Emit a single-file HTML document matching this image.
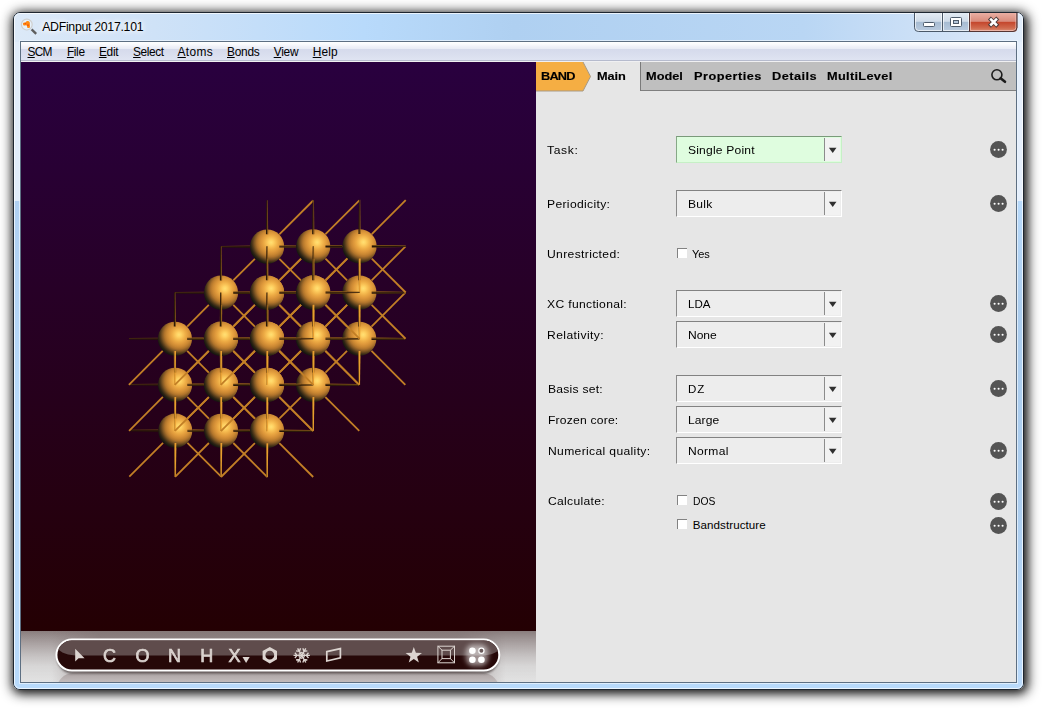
<!DOCTYPE html>
<html><head><meta charset="utf-8"><title>ADFinput</title>
<style>
html,body{margin:0;padding:0;background:#fff;}
body{width:1042px;height:709px;position:relative;overflow:hidden;font-family:"Liberation Sans",sans-serif;}
.abs{position:absolute;}
#win{position:absolute;left:13px;top:12px;width:1011px;height:678px;box-sizing:border-box;border-radius:7px;
 border:1px solid #1e2630;background:#b8dafb;overflow:hidden;}
#winsh{position:absolute;left:13px;top:12px;width:1011px;height:678px;border-radius:7px;
 box-shadow:1.5px 2px 6px rgba(0,0,0,.2),1.5px 2px 12px 2px rgba(0,0,0,.9);}
#win .tb{position:absolute;left:0;top:0;width:1009px;height:29px;background:linear-gradient(90deg,#dce9f8 0px,#cfe2f7 140px,#b8dafb 350px,#afd0f1 500px,#b9d6f4 790px,#d2e3f7 940px,#e0ecfa 1009px);}
#win .fl{position:absolute;left:0;top:29px;width:7px;height:159px;background:#e2edfa;}
#win .fl2{position:absolute;left:0;top:188px;width:7px;bottom:0;background:linear-gradient(180deg,#b0d0f2 0%,#b8dafb 45%,#b8dafb 100%);}
#win .fr{position:absolute;right:0;top:29px;width:7px;height:159px;background:#e5effc;}
#win .fr2{position:absolute;right:0;top:188px;width:7px;bottom:0;background:linear-gradient(180deg,#b8dafb 0%,#accdee 22%,#accdee 60%,#badafb 100%);}
#win .hl{position:absolute;left:0;top:0;right:0;bottom:0;border-radius:6px;border:1px solid rgba(255,255,255,.72);}
#cborder{position:absolute;left:20px;top:41px;width:997px;height:642px;box-sizing:border-box;border:1px solid #5d6f82;background:#e6e6e6;box-shadow:0 0 0 1px rgba(235,244,253,.75);}
#menubar{position:absolute;left:21px;top:42px;width:995px;height:20px;box-sizing:border-box;
 background:linear-gradient(180deg,#ffffff 0px,#fafbfd 2px,#eef0f8 5px,#e8ebf5 7px,#d6dbec 7.5px,#d9deee 12px,#dfe4f2 18px,#b6bbcd 18px,#b6bbcd 19px,#f0f0f2 19px,#f0f0f2 20px);}
#view{position:absolute;left:21px;top:62px;width:515px;height:569px;background:linear-gradient(180deg,#29003f 0%,#240003 100%);}
#tbar{position:absolute;left:21px;top:631px;width:515px;height:51px;background:linear-gradient(180deg,#8a7c7c 0%,#bab2b2 100%);overflow:hidden;}
#panel{position:absolute;left:536px;top:62px;width:480px;height:620px;background:#e6e6e6;}
.t{position:absolute;white-space:nowrap;color:#000;line-height:1;}
.t u{text-decoration:underline;text-underline-offset:0.6px;text-decoration-thickness:1px;}
/*STYLE*/
</style></head><body>
<div id="winsh"></div>
<div id="win"><div class="tb"></div><div class="fl"></div><div class="fl2"></div><div class="fr"></div><div class="fr2"></div><div class="hl"></div></div>
<div id="cborder"></div>
<div id="menubar"></div>
<div id="view"></div>
<svg class="abs" style="left:0;top:0" width="1042" height="709" viewBox="0 0 1042 709">
<defs>
<radialGradient id="sg" cx="0.615" cy="0.38" r="0.645">
<stop offset="0.00" stop-color="#ffe074"/>
<stop offset="0.10" stop-color="#ffd364"/>
<stop offset="0.20" stop-color="#f8c054"/>
<stop offset="0.32" stop-color="#ecaa44"/>
<stop offset="0.45" stop-color="#dc963a"/>
<stop offset="0.56" stop-color="#c88632"/>
<stop offset="0.65" stop-color="#b0742c"/>
<stop offset="0.75" stop-color="#825824"/>
<stop offset="0.84" stop-color="#523a1a"/>
<stop offset="0.92" stop-color="#2c2414"/>
<stop offset="1.00" stop-color="#161610"/>
</radialGradient>
<clipPath id="vc"><rect x="21" y="62" width="515" height="569"/></clipPath>
</defs>
<g clip-path="url(#vc)" stroke-width="2" stroke-linecap="butt">
<circle cx="267.13" cy="338.77" r="17.05" fill="url(#sg)"/>
<circle cx="221.20" cy="384.71" r="17.05" fill="url(#sg)"/>
<circle cx="175.26" cy="430.65" r="17.05" fill="url(#sg)"/>
<circle cx="313.13" cy="338.76" r="17.07" fill="url(#sg)"/>
<circle cx="267.12" cy="384.77" r="17.07" fill="url(#sg)"/>
<circle cx="221.11" cy="430.78" r="17.07" fill="url(#sg)"/>
<circle cx="267.12" cy="292.75" r="17.07" fill="url(#sg)"/>
<circle cx="221.11" cy="338.76" r="17.07" fill="url(#sg)"/>
<circle cx="175.10" cy="384.77" r="17.07" fill="url(#sg)"/>
<circle cx="359.26" cy="338.75" r="17.10" fill="url(#sg)"/>
<circle cx="313.18" cy="384.83" r="17.10" fill="url(#sg)"/>
<circle cx="267.10" cy="430.91" r="17.10" fill="url(#sg)"/>
<circle cx="313.18" cy="292.67" r="17.10" fill="url(#sg)"/>
<circle cx="267.10" cy="338.75" r="17.10" fill="url(#sg)"/>
<circle cx="221.02" cy="384.83" r="17.10" fill="url(#sg)"/>
<circle cx="267.10" cy="246.59" r="17.10" fill="url(#sg)"/>
<circle cx="221.02" cy="292.67" r="17.10" fill="url(#sg)"/>
<circle cx="174.94" cy="338.75" r="17.10" fill="url(#sg)"/>
<circle cx="359.38" cy="292.59" r="17.13" fill="url(#sg)"/>
<circle cx="313.23" cy="338.74" r="17.13" fill="url(#sg)"/>
<circle cx="267.08" cy="384.89" r="17.13" fill="url(#sg)"/>
<circle cx="313.23" cy="246.44" r="17.13" fill="url(#sg)"/>
<circle cx="267.08" cy="292.59" r="17.13" fill="url(#sg)"/>
<circle cx="220.93" cy="338.74" r="17.13" fill="url(#sg)"/>
<circle cx="359.51" cy="246.28" r="17.15" fill="url(#sg)"/>
<circle cx="313.29" cy="292.50" r="17.15" fill="url(#sg)"/>
<circle cx="267.06" cy="338.73" r="17.15" fill="url(#sg)"/>
<path d="M174.25 447.73L174.76 476.39L175.62 476.39L175.62 447.73Z" fill="#2c1a08"/>
<path d="M175.50 447.73L175.50 476.39L176.08 476.39L176.38 447.73Z" fill="#805418"/>
<path d="M158.19 429.54L129.55 429.86L129.55 430.44L158.19 430.42Z" fill="#6c4614"/>
<path d="M158.19 430.30L129.55 430.32L129.55 431.18L158.19 431.67Z" fill="#261608"/>
<path d="M203.75 383.63L192.30 383.78L192.30 384.53L203.75 384.51Z" fill="#6c4614"/>
<path d="M203.75 384.39L192.30 384.41L192.30 385.58L203.75 385.75Z" fill="#261608"/>
<path d="M249.84 337.71L238.20 337.88L238.20 338.64L249.84 338.60Z" fill="#6c4614"/>
<path d="M249.84 338.48L238.20 338.52L238.20 339.68L249.84 339.84Z" fill="#261608"/>
<path d="M220.16 402.00L220.35 413.62L221.51 413.62L221.53 402.00Z" fill="#2c1a08"/>
<path d="M221.41 402.00L221.39 413.62L222.15 413.62L222.29 402.00Z" fill="#805418"/>
<path d="M284.27 337.71L295.92 337.88L295.92 339.01L284.27 339.04Z" fill="#be7e26"/>
<path d="M284.27 338.92L295.92 338.89L295.92 339.68L284.27 339.85Z" fill="#6e4816"/>
<path d="M266.07 355.91L266.24 367.55L267.41 367.55L267.44 355.91Z" fill="#2c1a08"/>
<path d="M267.32 355.91L267.29 367.55L268.05 367.55L268.21 355.91Z" fill="#805418"/>
<path d="M238.36 383.62L249.85 383.77L249.85 384.91L238.36 384.95Z" fill="#be7e26"/>
<path d="M238.36 384.83L249.85 384.79L249.85 385.58L238.36 385.76Z" fill="#6e4816"/>
<path d="M192.45 429.54L203.95 429.67L203.95 430.80L192.45 430.86Z" fill="#be7e26"/>
<path d="M192.45 430.74L203.95 430.68L203.95 431.48L192.45 431.67Z" fill="#6e4816"/>
<line x1="279.33" y1="350.97" x2="301.06" y2="372.70" stroke="#c27f26" stroke-width="1.8"/>
<line x1="279.33" y1="326.58" x2="301.06" y2="304.85" stroke="#c27f26" stroke-width="1.8"/>
<line x1="233.39" y1="372.52" x2="254.94" y2="350.97" stroke="#c27f26" stroke-width="1.8"/>
<line x1="233.39" y1="396.90" x2="255.12" y2="418.64" stroke="#c27f26" stroke-width="1.8"/>
<line x1="187.45" y1="418.46" x2="208.83" y2="397.08" stroke="#c27f26" stroke-width="1.8"/>
<line x1="187.45" y1="442.84" x2="221.20" y2="476.59" stroke="#c27f26" stroke-width="1.8"/>
<line x1="163.07" y1="442.84" x2="129.32" y2="476.59" stroke="#c27f26" stroke-width="1.8"/>
<path d="M220.07 447.89L220.54 476.59L221.40 476.59L221.44 447.89Z" fill="#2c1a08"/>
<path d="M221.32 447.89L221.28 476.59L221.86 476.59L222.21 447.89Z" fill="#805418"/>
<path d="M158.00 383.68L129.32 384.05L129.32 384.63L158.00 384.57Z" fill="#6c4614"/>
<path d="M158.00 384.45L129.32 384.51L129.32 385.37L158.00 385.82Z" fill="#261608"/>
<path d="M187.41 429.63L203.99 429.67L203.99 430.55L187.41 430.51Z" fill="#6c4614"/>
<path d="M187.41 430.39L203.99 430.43L203.99 431.79L187.41 431.75Z" fill="#261608"/>
<path d="M174.16 418.49L174.10 401.90L175.46 401.90L175.52 418.49Z" fill="#2c1a08"/>
<path d="M175.40 418.49L175.34 401.90L176.22 401.90L176.28 418.49Z" fill="#805418"/>
<path d="M203.63 337.70L192.17 337.87L192.17 338.63L203.63 338.59Z" fill="#6c4614"/>
<path d="M203.63 338.47L192.17 338.51L192.17 339.67L203.63 339.83Z" fill="#261608"/>
<path d="M330.44 337.70L342.09 337.87L342.09 339.00L330.44 339.03Z" fill="#be7e26"/>
<path d="M330.44 338.91L342.09 338.88L342.09 339.67L330.44 339.83Z" fill="#6e4816"/>
<path d="M266.06 402.08L266.23 413.73L267.39 413.73L267.43 402.08Z" fill="#2c1a08"/>
<path d="M267.31 402.08L267.27 413.73L268.03 413.73L268.19 402.08Z" fill="#805418"/>
<path d="M238.14 383.67L249.79 383.69L249.79 384.57L238.14 384.55Z" fill="#6c4614"/>
<path d="M238.14 384.43L249.79 384.45L249.79 385.81L238.14 385.79Z" fill="#261608"/>
<path d="M249.79 291.72L238.14 291.90L238.14 292.66L249.79 292.60Z" fill="#6c4614"/>
<path d="M249.79 292.48L238.14 292.54L238.14 293.70L249.79 293.85Z" fill="#261608"/>
<path d="M312.04 355.92L312.19 367.59L313.36 367.59L313.41 355.92Z" fill="#2c1a08"/>
<path d="M313.29 355.92L313.24 367.59L314.00 367.59L314.17 355.92Z" fill="#805418"/>
<path d="M284.28 337.71L295.95 337.71L295.95 338.59L284.28 338.59Z" fill="#6c4614"/>
<path d="M284.28 338.47L295.95 338.47L295.95 339.83L284.28 339.83Z" fill="#261608"/>
<path d="M284.28 383.68L295.95 383.83L295.95 384.96L284.28 385.01Z" fill="#be7e26"/>
<path d="M284.28 384.89L295.95 384.84L295.95 385.64L284.28 385.82Z" fill="#6e4816"/>
<path d="M266.07 355.92L266.06 367.59L266.78 367.59L266.79 355.92Z" fill="#96621c"/>
<path d="M266.67 355.92L266.66 367.59L268.18 367.59L268.19 355.92Z" fill="#e89e30"/>
<path d="M238.30 429.66L249.98 429.80L249.98 430.93L238.30 430.99Z" fill="#be7e26"/>
<path d="M238.30 430.87L249.98 430.81L249.98 431.60L238.30 431.80Z" fill="#6e4816"/>
<path d="M284.28 291.72L295.95 291.90L295.95 293.03L284.28 293.04Z" fill="#be7e26"/>
<path d="M284.28 292.92L295.95 292.91L295.95 293.71L284.28 293.85Z" fill="#6e4816"/>
<path d="M220.10 367.59L220.08 355.92L221.44 355.92L221.46 367.59Z" fill="#2c1a08"/>
<path d="M221.34 367.59L221.32 355.92L222.20 355.92L222.22 367.59Z" fill="#805418"/>
<path d="M220.10 402.06L220.08 413.58L220.80 413.58L220.82 402.06Z" fill="#96621c"/>
<path d="M220.70 402.06L220.68 413.58L222.20 413.58L222.22 402.06Z" fill="#e89e30"/>
<path d="M266.07 321.44L266.06 309.94L267.42 309.94L267.43 321.44Z" fill="#2c1a08"/>
<path d="M267.31 321.44L267.30 309.94L268.18 309.94L268.19 321.44Z" fill="#805418"/>
<path d="M238.30 337.71L249.80 337.71L249.80 339.03L238.30 339.03Z" fill="#be7e26"/>
<path d="M238.30 338.91L249.80 338.91L249.80 339.83L238.30 339.83Z" fill="#6e4816"/>
<path d="M192.31 383.69L203.84 383.67L203.84 384.99L192.31 385.01Z" fill="#be7e26"/>
<path d="M192.31 384.89L203.84 384.87L203.84 385.79L192.31 385.81Z" fill="#6e4816"/>
<path d="M174.08 442.88L174.44 476.79L174.92 476.79L174.84 442.88Z" fill="#96621c"/>
<path d="M174.72 442.88L174.80 476.79L175.76 476.79L176.35 442.88Z" fill="#e89e30"/>
<line x1="325.34" y1="350.97" x2="359.14" y2="384.77" stroke="#c27f26" stroke-width="1.8"/>
<line x1="325.34" y1="326.55" x2="347.10" y2="304.79" stroke="#c27f26" stroke-width="1.8"/>
<line x1="279.33" y1="372.56" x2="300.92" y2="350.97" stroke="#c27f26" stroke-width="1.8"/>
<line x1="279.33" y1="304.96" x2="300.92" y2="326.55" stroke="#c27f26" stroke-width="1.8"/>
<line x1="279.33" y1="396.98" x2="313.13" y2="430.78" stroke="#c27f26" stroke-width="1.8"/>
<line x1="233.32" y1="418.57" x2="254.91" y2="396.98" stroke="#c27f26" stroke-width="1.8"/>
<line x1="233.32" y1="350.97" x2="254.91" y2="372.56" stroke="#c27f26" stroke-width="1.8"/>
<line x1="233.32" y1="442.99" x2="267.12" y2="476.79" stroke="#c27f26" stroke-width="1.8"/>
<line x1="208.90" y1="442.99" x2="175.10" y2="476.79" stroke="#c27f26" stroke-width="1.8"/>
<line x1="187.31" y1="396.98" x2="208.90" y2="418.57" stroke="#c27f26" stroke-width="1.8"/>
<line x1="279.33" y1="280.54" x2="301.09" y2="258.78" stroke="#c27f26" stroke-width="1.8"/>
<line x1="233.32" y1="326.55" x2="254.91" y2="304.96" stroke="#c27f26" stroke-width="1.8"/>
<line x1="187.31" y1="372.56" x2="208.90" y2="350.97" stroke="#c27f26" stroke-width="1.8"/>
<line x1="162.89" y1="396.98" x2="129.09" y2="430.78" stroke="#c27f26" stroke-width="1.8"/>
<path d="M376.40 337.69L405.15 338.10L405.15 338.94L376.40 339.02Z" fill="#be7e26"/>
<path d="M376.40 338.90L405.15 338.82L405.15 339.42L376.40 339.82Z" fill="#6e4816"/>
<path d="M358.15 355.94L358.48 384.77L359.34 384.77L359.52 355.94Z" fill="#2c1a08"/>
<path d="M359.40 355.94L359.22 384.77L359.80 384.77L360.28 355.94Z" fill="#805418"/>
<path d="M330.34 383.74L359.14 384.11L359.14 384.95L330.34 385.07Z" fill="#be7e26"/>
<path d="M330.34 384.95L359.14 384.83L359.14 385.43L330.34 385.88Z" fill="#6e4816"/>
<path d="M312.09 401.99L312.47 430.78L313.33 430.78L313.46 401.99Z" fill="#2c1a08"/>
<path d="M313.34 401.99L313.21 430.78L313.79 430.78L314.23 401.99Z" fill="#805418"/>
<path d="M284.29 429.79L313.13 430.12L313.13 430.96L284.29 431.12Z" fill="#be7e26"/>
<path d="M284.29 431.00L313.13 430.84L313.13 431.44L284.29 431.93Z" fill="#6e4816"/>
<path d="M266.04 448.04L266.46 476.79L267.32 476.79L267.41 448.04Z" fill="#2c1a08"/>
<path d="M267.29 448.04L267.20 476.79L267.78 476.79L268.17 448.04Z" fill="#805418"/>
<path d="M249.92 245.58L221.11 246.08L221.11 246.66L249.92 246.47Z" fill="#6c4614"/>
<path d="M249.92 246.35L221.11 246.54L221.11 247.40L249.92 247.71Z" fill="#261608"/>
<path d="M203.87 291.63L175.10 292.09L175.10 292.67L203.87 292.52Z" fill="#6c4614"/>
<path d="M203.87 292.40L175.10 292.55L175.10 293.41L203.87 293.77Z" fill="#261608"/>
<path d="M157.82 337.69L129.09 338.10L129.09 338.68L157.82 338.57Z" fill="#6c4614"/>
<path d="M157.82 338.45L129.09 338.56L129.09 339.42L157.82 339.82Z" fill="#261608"/>
<path d="M233.30 429.75L249.92 429.80L249.92 430.68L233.30 430.63Z" fill="#6c4614"/>
<path d="M233.30 430.51L249.92 430.56L249.92 431.92L233.30 431.87Z" fill="#261608"/>
<path d="M220.02 418.60L219.99 401.99L221.35 401.99L221.38 418.60Z" fill="#2c1a08"/>
<path d="M221.26 418.60L221.23 401.99L222.11 401.99L222.14 418.60Z" fill="#805418"/>
<path d="M187.27 383.73L203.87 383.75L203.87 384.63L187.27 384.61Z" fill="#6c4614"/>
<path d="M187.27 384.49L203.87 384.51L203.87 385.87L187.27 385.85Z" fill="#261608"/>
<path d="M174.00 372.57L173.94 355.94L175.30 355.94L175.36 372.57Z" fill="#2c1a08"/>
<path d="M175.24 372.57L175.18 355.94L176.06 355.94L176.12 372.57Z" fill="#805418"/>
<path d="M330.52 291.64L342.18 291.82L342.18 292.95L330.52 292.96Z" fill="#be7e26"/>
<path d="M330.52 292.84L342.18 292.83L342.18 293.62L330.52 293.77Z" fill="#6e4816"/>
<path d="M238.07 337.70L249.75 337.69L249.75 338.57L238.07 338.58Z" fill="#6c4614"/>
<path d="M238.07 338.46L249.75 338.45L249.75 339.81L238.07 339.82Z" fill="#261608"/>
<path d="M266.05 309.72L266.05 321.57L266.77 321.57L266.77 309.72Z" fill="#96621c"/>
<path d="M266.65 309.72L266.65 321.57L268.17 321.57L268.17 309.72Z" fill="#e89e30"/>
<path d="M284.29 383.73L295.98 383.75L295.98 384.63L284.29 384.61Z" fill="#6c4614"/>
<path d="M284.29 384.49L295.98 384.51L295.98 385.87L284.29 385.85Z" fill="#261608"/>
<path d="M312.09 355.93L312.10 367.63L312.82 367.63L312.81 355.93Z" fill="#96621c"/>
<path d="M312.69 355.93L312.70 367.63L314.22 367.63L314.21 355.93Z" fill="#e89e30"/>
<path d="M312.09 321.58L312.10 309.88L313.46 309.88L313.45 321.58Z" fill="#2c1a08"/>
<path d="M313.33 321.58L313.34 309.88L314.22 309.88L314.21 321.58Z" fill="#805418"/>
<path d="M284.29 291.66L295.98 291.64L295.98 292.52L284.29 292.54Z" fill="#6c4614"/>
<path d="M284.29 292.42L295.98 292.40L295.98 293.76L284.29 293.78Z" fill="#261608"/>
<path d="M284.29 337.69L295.97 337.70L295.97 339.02L284.29 339.01Z" fill="#be7e26"/>
<path d="M284.29 338.89L295.97 338.90L295.97 339.82L284.29 339.81Z" fill="#6e4816"/>
<path d="M266.05 367.62L266.05 355.94L267.41 355.94L267.41 367.62Z" fill="#2c1a08"/>
<path d="M267.29 367.62L267.29 355.94L268.17 355.94L268.17 367.62Z" fill="#805418"/>
<path d="M238.23 383.75L249.94 383.73L249.94 385.05L238.23 385.07Z" fill="#be7e26"/>
<path d="M238.23 384.95L249.94 384.93L249.94 385.85L238.23 385.87Z" fill="#6e4816"/>
<path d="M220.02 355.93L219.99 367.63L220.71 367.63L220.74 355.93Z" fill="#96621c"/>
<path d="M220.62 355.93L220.59 367.63L222.11 367.63L222.14 355.93Z" fill="#e89e30"/>
<path d="M284.29 245.58L295.97 245.78L295.97 246.91L284.29 246.91Z" fill="#be7e26"/>
<path d="M284.29 246.79L295.97 246.79L295.97 247.59L284.29 247.71Z" fill="#6e4816"/>
<path d="M238.23 291.64L249.94 291.66L249.94 292.98L238.23 292.96Z" fill="#be7e26"/>
<path d="M238.23 292.84L249.94 292.86L249.94 293.78L238.23 293.76Z" fill="#6e4816"/>
<path d="M220.02 321.58L219.99 309.88L221.35 309.88L221.38 321.58Z" fill="#2c1a08"/>
<path d="M221.26 321.58L221.23 309.88L222.11 309.88L222.14 321.58Z" fill="#805418"/>
<path d="M330.50 337.70L342.03 337.69L342.03 338.57L330.50 338.58Z" fill="#6c4614"/>
<path d="M330.50 338.46L342.03 338.45L342.03 339.81L330.50 339.82Z" fill="#261608"/>
<path d="M266.05 402.15L266.05 413.68L266.77 413.68L266.77 402.15Z" fill="#96621c"/>
<path d="M266.65 402.15L266.65 413.68L268.17 413.68L268.17 402.15Z" fill="#e89e30"/>
<path d="M266.05 275.37L266.05 263.83L267.41 263.83L267.41 275.37Z" fill="#2c1a08"/>
<path d="M267.29 275.37L267.29 263.83L268.17 263.83L268.17 275.37Z" fill="#805418"/>
<path d="M192.18 337.69L203.72 337.70L203.72 339.02L192.18 339.01Z" fill="#be7e26"/>
<path d="M192.18 338.89L203.72 338.90L203.72 339.82L192.18 339.81Z" fill="#6e4816"/>
<path d="M219.95 443.03L220.36 476.99L220.84 476.99L220.71 443.03Z" fill="#96621c"/>
<path d="M220.59 443.03L220.72 476.99L221.68 476.99L222.22 443.03Z" fill="#e89e30"/>
<path d="M173.92 397.00L174.28 430.91L174.76 430.91L174.69 397.00Z" fill="#96621c"/>
<path d="M174.57 397.00L174.64 430.91L175.60 430.91L176.19 397.00Z" fill="#e89e30"/>
<line x1="371.49" y1="350.98" x2="405.34" y2="384.83" stroke="#c27f26" stroke-width="1.8"/>
<line x1="371.49" y1="326.52" x2="405.34" y2="292.67" stroke="#c27f26" stroke-width="1.8"/>
<line x1="325.41" y1="372.60" x2="347.03" y2="350.98" stroke="#c27f26" stroke-width="1.8"/>
<line x1="325.41" y1="304.90" x2="347.03" y2="326.52" stroke="#c27f26" stroke-width="1.8"/>
<line x1="325.41" y1="397.06" x2="359.26" y2="430.91" stroke="#c27f26" stroke-width="1.8"/>
<line x1="279.33" y1="418.68" x2="300.95" y2="397.06" stroke="#c27f26" stroke-width="1.8"/>
<line x1="279.33" y1="350.98" x2="300.95" y2="372.60" stroke="#c27f26" stroke-width="1.8"/>
<line x1="279.33" y1="443.14" x2="313.18" y2="476.99" stroke="#c27f26" stroke-width="1.8"/>
<line x1="254.87" y1="443.14" x2="221.02" y2="476.99" stroke="#c27f26" stroke-width="1.8"/>
<line x1="233.25" y1="397.06" x2="254.87" y2="418.68" stroke="#c27f26" stroke-width="1.8"/>
<line x1="325.59" y1="280.26" x2="347.39" y2="258.46" stroke="#c27f26" stroke-width="1.8"/>
<line x1="279.33" y1="326.52" x2="300.95" y2="304.90" stroke="#c27f26" stroke-width="1.8"/>
<line x1="279.33" y1="258.82" x2="300.95" y2="280.44" stroke="#c27f26" stroke-width="1.8"/>
<line x1="233.25" y1="372.60" x2="254.87" y2="350.98" stroke="#c27f26" stroke-width="1.8"/>
<line x1="233.25" y1="304.90" x2="254.87" y2="326.52" stroke="#c27f26" stroke-width="1.8"/>
<line x1="208.79" y1="397.06" x2="174.94" y2="430.91" stroke="#c27f26" stroke-width="1.8"/>
<line x1="187.17" y1="350.98" x2="208.79" y2="372.60" stroke="#c27f26" stroke-width="1.8"/>
<line x1="279.33" y1="234.36" x2="313.18" y2="200.51" stroke="#c27f26" stroke-width="1.8"/>
<line x1="233.25" y1="280.44" x2="254.87" y2="258.82" stroke="#c27f26" stroke-width="1.8"/>
<line x1="187.17" y1="326.52" x2="208.79" y2="304.90" stroke="#c27f26" stroke-width="1.8"/>
<line x1="162.71" y1="350.98" x2="128.86" y2="384.83" stroke="#c27f26" stroke-width="1.8"/>
<path d="M376.55 291.55L405.34 292.01L405.34 292.85L376.55 292.88Z" fill="#be7e26"/>
<path d="M376.55 292.76L405.34 292.73L405.34 293.33L376.55 293.69Z" fill="#6e4816"/>
<path d="M358.23 326.51L358.28 309.83L359.64 309.83L359.59 326.51Z" fill="#2c1a08"/>
<path d="M359.47 326.51L359.52 309.83L360.40 309.83L360.35 326.51Z" fill="#805418"/>
<path d="M330.42 337.68L347.06 337.69L347.06 339.01L330.42 339.00Z" fill="#be7e26"/>
<path d="M330.42 338.88L347.06 338.89L347.06 339.81L330.42 339.80Z" fill="#6e4816"/>
<path d="M312.13 372.61L312.15 355.95L313.51 355.95L313.49 372.61Z" fill="#2c1a08"/>
<path d="M313.37 372.61L313.39 355.95L314.27 355.95L314.25 372.61Z" fill="#805418"/>
<path d="M284.30 383.81L300.96 383.79L300.96 385.11L284.30 385.13Z" fill="#be7e26"/>
<path d="M284.30 385.01L300.96 384.99L300.96 385.91L284.30 385.93Z" fill="#6e4816"/>
<path d="M266.04 418.71L266.03 402.07L267.39 402.07L267.40 418.71Z" fill="#2c1a08"/>
<path d="M267.28 418.71L267.27 402.07L268.15 402.07L268.16 418.71Z" fill="#805418"/>
<path d="M233.23 383.79L249.88 383.81L249.88 384.69L233.23 384.67Z" fill="#6c4614"/>
<path d="M233.23 384.55L249.88 384.57L249.88 385.93L233.23 385.91Z" fill="#261608"/>
<path d="M279.33 245.49L296.01 245.43L296.01 246.31L279.33 246.37Z" fill="#6c4614"/>
<path d="M279.33 246.25L296.01 246.19L296.01 247.55L279.33 247.61Z" fill="#261608"/>
<path d="M233.23 291.59L249.88 291.56L249.88 292.44L233.23 292.47Z" fill="#6c4614"/>
<path d="M233.23 292.35L249.88 292.32L249.88 293.68L233.23 293.71Z" fill="#261608"/>
<path d="M266.04 258.78L266.03 275.41L266.75 275.41L266.76 258.78Z" fill="#96621c"/>
<path d="M266.64 258.78L266.63 275.41L268.15 275.41L268.16 258.78Z" fill="#e89e30"/>
<path d="M219.94 372.61L219.90 355.95L221.26 355.95L221.30 372.61Z" fill="#2c1a08"/>
<path d="M221.18 372.61L221.14 355.95L222.02 355.95L222.06 372.61Z" fill="#805418"/>
<path d="M187.13 337.69L203.76 337.68L203.76 338.56L187.13 338.57Z" fill="#6c4614"/>
<path d="M187.13 338.45L203.76 338.44L203.76 339.80L187.13 339.81Z" fill="#261608"/>
<path d="M219.94 304.88L219.90 321.53L220.62 321.53L220.66 304.88Z" fill="#96621c"/>
<path d="M220.54 304.88L220.50 321.53L222.02 321.53L222.06 304.88Z" fill="#e89e30"/>
<path d="M312.14 309.66L312.15 321.53L312.87 321.53L312.86 309.66Z" fill="#96621c"/>
<path d="M312.74 309.66L312.75 321.53L314.27 321.53L314.26 309.66Z" fill="#e89e30"/>
<path d="M330.42 245.43L342.28 245.63L342.28 246.76L330.42 246.76Z" fill="#be7e26"/>
<path d="M330.42 246.64L342.28 246.64L342.28 247.43L330.42 247.56Z" fill="#6e4816"/>
<path d="M284.29 337.69L296.01 337.68L296.01 338.56L284.29 338.57Z" fill="#6c4614"/>
<path d="M284.29 338.45L296.01 338.44L296.01 339.80L284.29 339.81Z" fill="#261608"/>
<path d="M266.03 355.95L266.03 367.66L266.75 367.66L266.75 355.95Z" fill="#96621c"/>
<path d="M266.63 355.95L266.63 367.66L268.15 367.66L268.15 355.95Z" fill="#e89e30"/>
<path d="M284.30 291.56L296.00 291.58L296.00 292.90L284.30 292.88Z" fill="#be7e26"/>
<path d="M284.30 292.76L296.00 292.78L296.00 293.70L284.30 293.68Z" fill="#6e4816"/>
<path d="M266.03 321.54L266.03 309.83L267.39 309.83L267.39 321.54Z" fill="#2c1a08"/>
<path d="M267.27 321.54L267.27 309.83L268.15 309.83L268.15 321.54Z" fill="#805418"/>
<path d="M238.17 337.68L249.89 337.69L249.89 339.01L238.17 339.00Z" fill="#be7e26"/>
<path d="M238.17 338.88L249.89 338.89L249.89 339.81L238.17 339.80Z" fill="#6e4816"/>
<path d="M330.58 291.58L342.13 291.56L342.13 292.44L330.58 292.46Z" fill="#6c4614"/>
<path d="M330.58 292.34L342.13 292.32L342.13 293.68L330.58 293.70Z" fill="#261608"/>
<path d="M312.14 275.26L312.15 263.70L313.51 263.70L313.50 275.26Z" fill="#2c1a08"/>
<path d="M313.38 275.26L313.39 263.70L314.27 263.70L314.26 275.26Z" fill="#805418"/>
<path d="M371.53 337.61L405.54 338.08L405.54 338.65L371.53 338.55Z" fill="#6c4614"/>
<path d="M371.53 338.43L405.54 338.53L405.54 339.40L371.53 339.88Z" fill="#261608"/>
<path d="M358.16 350.98L358.72 384.89L359.20 384.89L358.92 350.98Z" fill="#96621c"/>
<path d="M358.80 350.98L359.08 384.89L360.04 384.89L360.43 350.98Z" fill="#e89e30"/>
<path d="M325.43 383.71L359.38 384.23L359.38 384.80L325.43 384.65Z" fill="#6c4614"/>
<path d="M325.43 384.53L359.38 384.68L359.38 385.55L325.43 385.98Z" fill="#261608"/>
<path d="M312.06 397.08L312.57 431.04L313.05 431.04L312.82 397.08Z" fill="#96621c"/>
<path d="M312.70 397.08L312.93 431.04L313.89 431.04L314.33 397.08Z" fill="#e89e30"/>
<path d="M279.33 429.81L313.23 430.38L313.23 430.96L279.33 430.75Z" fill="#6c4614"/>
<path d="M279.33 430.63L313.23 430.84L313.23 431.70L279.33 432.08Z" fill="#261608"/>
<path d="M265.96 443.18L266.42 477.19L266.90 477.19L266.72 443.18Z" fill="#96621c"/>
<path d="M266.60 443.18L266.78 477.19L267.74 477.19L268.23 443.18Z" fill="#e89e30"/>
<path d="M219.86 397.08L220.27 431.04L220.75 431.04L220.63 397.08Z" fill="#96621c"/>
<path d="M220.51 397.08L220.63 431.04L221.59 431.04L222.13 397.08Z" fill="#e89e30"/>
<path d="M265.96 234.32L266.42 200.29L267.29 200.29L267.41 234.32Z" fill="#2c1a08"/>
<path d="M267.29 234.32L267.17 200.29L267.74 200.29L268.23 234.32Z" fill="#805418"/>
<path d="M219.86 280.41L220.27 246.44L221.14 246.44L221.32 280.41Z" fill="#2c1a08"/>
<path d="M221.20 280.41L221.02 246.44L221.59 246.44L222.13 280.41Z" fill="#805418"/>
<path d="M173.76 350.98L174.12 384.89L174.60 384.89L174.53 350.98Z" fill="#96621c"/>
<path d="M174.41 350.98L174.48 384.89L175.44 384.89L176.04 350.98Z" fill="#e89e30"/>
<path d="M173.76 326.51L174.12 292.59L174.98 292.59L175.22 326.51Z" fill="#2c1a08"/>
<path d="M175.10 326.51L174.86 292.59L175.44 292.59L176.04 326.51Z" fill="#805418"/>
<line x1="371.63" y1="304.83" x2="405.54" y2="338.74" stroke="#c27f26" stroke-width="1.8"/>
<line x1="371.63" y1="280.34" x2="405.54" y2="246.44" stroke="#c27f26" stroke-width="1.8"/>
<line x1="325.48" y1="326.49" x2="347.14" y2="304.83" stroke="#c27f26" stroke-width="1.8"/>
<line x1="325.48" y1="258.68" x2="347.14" y2="280.34" stroke="#c27f26" stroke-width="1.8"/>
<line x1="325.48" y1="350.99" x2="359.38" y2="384.89" stroke="#c27f26" stroke-width="1.8"/>
<line x1="279.33" y1="372.64" x2="300.99" y2="350.99" stroke="#c27f26" stroke-width="1.8"/>
<line x1="279.33" y1="304.83" x2="300.99" y2="326.49" stroke="#c27f26" stroke-width="1.8"/>
<line x1="279.33" y1="397.14" x2="313.23" y2="431.04" stroke="#c27f26" stroke-width="1.8"/>
<line x1="254.83" y1="397.14" x2="220.93" y2="431.04" stroke="#c27f26" stroke-width="1.8"/>
<line x1="233.18" y1="350.99" x2="254.83" y2="372.64" stroke="#c27f26" stroke-width="1.8"/>
<line x1="325.48" y1="234.19" x2="359.38" y2="200.29" stroke="#c27f26" stroke-width="1.8"/>
<line x1="279.33" y1="280.34" x2="300.99" y2="258.68" stroke="#c27f26" stroke-width="1.8"/>
<line x1="233.18" y1="326.49" x2="254.83" y2="304.83" stroke="#c27f26" stroke-width="1.8"/>
<line x1="208.68" y1="350.99" x2="174.78" y2="384.89" stroke="#c27f26" stroke-width="1.8"/>
<path d="M376.70 245.27L405.54 245.78L405.54 246.62L376.70 246.60Z" fill="#be7e26"/>
<path d="M376.70 246.48L405.54 246.50L405.54 247.10L376.70 247.41Z" fill="#6e4816"/>
<path d="M358.36 280.31L358.40 263.57L359.76 263.57L359.72 280.31Z" fill="#2c1a08"/>
<path d="M359.60 280.31L359.64 263.57L360.52 263.57L360.48 280.31Z" fill="#805418"/>
<path d="M325.50 245.34L342.23 245.28L342.23 246.16L325.50 246.22Z" fill="#6c4614"/>
<path d="M325.50 246.10L342.23 246.04L342.23 247.40L325.50 247.46Z" fill="#261608"/>
<path d="M330.50 291.48L347.16 291.51L347.16 292.83L330.50 292.80Z" fill="#be7e26"/>
<path d="M330.50 292.68L347.16 292.71L347.16 293.63L330.50 293.60Z" fill="#6e4816"/>
<path d="M312.19 326.48L312.21 309.77L313.57 309.77L313.55 326.48Z" fill="#2c1a08"/>
<path d="M313.43 326.48L313.45 309.77L314.33 309.77L314.31 326.48Z" fill="#805418"/>
<path d="M279.33 291.51L296.03 291.48L296.03 292.36L279.33 292.39Z" fill="#6c4614"/>
<path d="M279.33 292.27L296.03 292.24L296.03 293.60L279.33 293.63Z" fill="#261608"/>
<path d="M312.19 258.65L312.21 275.30L312.93 275.30L312.91 258.65Z" fill="#96621c"/>
<path d="M312.79 258.65L312.81 275.30L314.33 275.30L314.31 258.65Z" fill="#e89e30"/>
<path d="M284.31 337.67L300.99 337.67L300.99 338.99L284.31 338.99Z" fill="#be7e26"/>
<path d="M284.31 338.87L300.99 338.87L300.99 339.79L284.31 339.79Z" fill="#6e4816"/>
<path d="M266.02 372.65L266.01 355.97L267.37 355.97L267.38 372.65Z" fill="#2c1a08"/>
<path d="M267.26 372.65L267.25 355.97L268.13 355.97L268.14 372.65Z" fill="#805418"/>
<path d="M233.16 337.67L249.84 337.67L249.84 338.55L233.16 338.55Z" fill="#6c4614"/>
<path d="M233.16 338.43L249.84 338.43L249.84 339.79L233.16 339.79Z" fill="#261608"/>
<path d="M266.02 304.82L266.01 321.50L266.73 321.50L266.74 304.82Z" fill="#96621c"/>
<path d="M266.62 304.82L266.61 321.50L268.13 321.50L268.14 304.82Z" fill="#e89e30"/>
<path d="M371.67 291.43L405.73 291.84L405.73 292.42L371.67 292.37Z" fill="#6c4614"/>
<path d="M371.67 292.25L405.73 292.30L405.73 293.16L371.67 293.70Z" fill="#261608"/>
<path d="M358.28 304.82L358.85 338.73L359.33 338.73L359.05 304.82Z" fill="#96621c"/>
<path d="M358.93 304.82L359.21 338.73L360.17 338.73L360.55 304.82Z" fill="#e89e30"/>
<path d="M325.50 337.60L359.51 338.07L359.51 338.64L325.50 338.54Z" fill="#6c4614"/>
<path d="M325.50 338.42L359.51 338.52L359.51 339.39L325.50 339.87Z" fill="#261608"/>
<path d="M312.11 350.99L312.63 384.95L313.11 384.95L312.88 350.99Z" fill="#96621c"/>
<path d="M312.76 350.99L312.99 384.95L313.95 384.95L314.39 350.99Z" fill="#e89e30"/>
<path d="M279.33 383.77L313.29 384.29L313.29 384.86L279.33 384.71Z" fill="#6c4614"/>
<path d="M279.33 384.59L313.29 384.74L313.29 385.61L279.33 386.04Z" fill="#261608"/>
<path d="M265.94 397.16L266.40 431.17L266.88 431.17L266.71 397.16Z" fill="#96621c"/>
<path d="M266.59 397.16L266.76 431.17L267.72 431.17L268.22 397.16Z" fill="#e89e30"/>
<path d="M312.11 234.14L312.63 200.06L313.49 200.06L313.57 234.14Z" fill="#2c1a08"/>
<path d="M313.45 234.14L313.37 200.06L313.95 200.06L314.39 234.14Z" fill="#805418"/>
<path d="M265.94 280.31L266.40 246.28L267.27 246.28L267.40 280.31Z" fill="#2c1a08"/>
<path d="M267.28 280.31L267.15 246.28L267.72 246.28L268.22 280.31Z" fill="#805418"/>
<path d="M219.77 350.99L220.18 384.95L220.66 384.95L220.54 350.99Z" fill="#96621c"/>
<path d="M220.42 350.99L220.54 384.95L221.50 384.95L222.05 350.99Z" fill="#e89e30"/>
<path d="M219.77 326.48L220.18 292.50L221.05 292.50L221.23 326.48Z" fill="#2c1a08"/>
<path d="M221.11 326.48L220.93 292.50L221.50 292.50L222.05 326.48Z" fill="#805418"/>
<line x1="371.78" y1="258.55" x2="405.73" y2="292.50" stroke="#c27f26" stroke-width="1.8"/>
<line x1="371.78" y1="234.02" x2="405.73" y2="200.06" stroke="#c27f26" stroke-width="1.8"/>
<line x1="325.55" y1="280.24" x2="347.24" y2="258.55" stroke="#c27f26" stroke-width="1.8"/>
<line x1="325.55" y1="304.77" x2="359.51" y2="338.73" stroke="#c27f26" stroke-width="1.8"/>
<line x1="279.33" y1="326.46" x2="301.02" y2="304.77" stroke="#c27f26" stroke-width="1.8"/>
<line x1="279.33" y1="350.99" x2="313.29" y2="384.95" stroke="#c27f26" stroke-width="1.8"/>
<line x1="254.80" y1="350.99" x2="220.84" y2="384.95" stroke="#c27f26" stroke-width="1.8"/>
<path d="M371.81 245.10L405.93 245.47L405.93 246.04L371.81 246.04Z" fill="#6c4614"/>
<path d="M371.81 245.92L405.93 245.92L405.93 246.79L371.81 247.38Z" fill="#261608"/>
<path d="M358.40 258.51L358.97 292.42L359.45 292.42L359.17 258.51Z" fill="#96621c"/>
<path d="M359.05 258.51L359.33 292.42L360.29 292.42L360.68 258.51Z" fill="#e89e30"/>
<path d="M358.40 233.97L358.97 199.83L359.84 199.83L359.86 233.97Z" fill="#2c1a08"/>
<path d="M359.74 233.97L359.72 199.83L360.29 199.83L360.68 233.97Z" fill="#805418"/>
<path d="M325.57 291.34L359.63 291.76L359.63 292.34L325.57 292.28Z" fill="#6c4614"/>
<path d="M325.57 292.16L359.63 292.22L359.63 293.08L325.57 293.62Z" fill="#261608"/>
<path d="M312.16 304.75L312.68 338.71L313.16 338.71L312.93 304.75Z" fill="#96621c"/>
<path d="M312.81 304.75L313.04 338.71L314.00 338.71L314.44 304.75Z" fill="#e89e30"/>
<path d="M312.16 280.21L312.68 246.13L313.54 246.13L313.62 280.21Z" fill="#2c1a08"/>
<path d="M313.50 280.21L313.42 246.13L314.00 246.13L314.44 280.21Z" fill="#805418"/>
<path d="M279.33 337.59L313.34 338.05L313.34 338.63L279.33 338.52Z" fill="#6c4614"/>
<path d="M279.33 338.40L313.34 338.51L313.34 339.37L279.33 339.86Z" fill="#261608"/>
<path d="M265.92 350.99L266.39 385.01L266.87 385.01L266.69 350.99Z" fill="#96621c"/>
<path d="M266.57 350.99L266.75 385.01L267.71 385.01L268.20 350.99Z" fill="#e89e30"/>
<path d="M265.92 326.45L266.39 292.42L267.25 292.42L267.38 326.45Z" fill="#2c1a08"/>
<path d="M267.26 326.45L267.13 292.42L267.71 292.42L268.20 326.45Z" fill="#805418"/>
</g>
</svg>
<svg class="abs" style="left:21px;top:631px" width="515" height="51" viewBox="21 631 515 51">
<defs>
<linearGradient id="tbg" x1="0" y1="0" x2="0" y2="1"><stop offset="0" stop-color="#857878"/><stop offset="0.5" stop-color="#9c9292"/><stop offset="1" stop-color="#a89f9f"/></linearGradient>
<linearGradient id="tbv" x1="0" y1="0" x2="0" y2="1"><stop offset="0" stop-color="#dedede" stop-opacity="0.05"/><stop offset="0.35" stop-color="#dedede" stop-opacity=".45"/><stop offset="0.7" stop-color="#dedede" stop-opacity=".9"/><stop offset="1" stop-color="#e2e2e2" stop-opacity="1"/></linearGradient><linearGradient id="mlh" x1="0" y1="0" x2="1" y2="0"><stop offset="0" stop-color="#fff"/><stop offset="0.38" stop-color="#fff"/><stop offset="1" stop-color="#000"/></linearGradient><linearGradient id="mrh" x1="1" y1="0" x2="0" y2="0"><stop offset="0" stop-color="#fff"/><stop offset="0.38" stop-color="#fff"/><stop offset="1" stop-color="#000"/></linearGradient><mask id="ml"><rect x="21" y="631" width="80" height="51" fill="url(#mlh)"/></mask><mask id="mr"><rect x="456" y="631" width="80" height="51" fill="url(#mrh)"/></mask>

<linearGradient id="refl" x1="0" y1="0" x2="0" y2="1"><stop offset="0" stop-color="#aaa2a2"/><stop offset="0.12" stop-color="#b6aeae"/><stop offset="0.27" stop-color="#c2bcbc"/><stop offset="1" stop-color="#c8c2c2"/></linearGradient>
<clipPath id="pillc"><rect x="57.2" y="640.4" width="441.3" height="29.4" rx="14.7"/></clipPath>
<filter id="psh" x="-5%" y="-30%" width="110%" height="160%"><feGaussianBlur stdDeviation="1.3"/></filter>
<filter id="glow" x="-50%" y="-50%" width="200%" height="200%"><feGaussianBlur stdDeviation="2.6"/></filter>
</defs>
<rect x="21" y="631" width="515" height="51" fill="url(#tbg)"/>
<rect x="21" y="631" width="80" height="51" fill="url(#tbv)" mask="url(#ml)"/>
<rect x="456" y="631" width="80" height="51" fill="url(#tbv)" mask="url(#mr)"/>
<rect x="56.5" y="673" width="443" height="34" rx="17" fill="url(#refl)"/>
<rect x="57" y="642" width="442" height="31.5" rx="15.7" fill="#4a4040" opacity=".75" filter="url(#psh)"/>
<rect x="56.4" y="639.6" width="442.9" height="31" rx="15.5" fill="#260808" stroke="#ffffff" stroke-width="2"/>
<g clip-path="url(#pillc)"><path d="M56 639 H500 V648 C497 653 490 655.6 478 655.6 H80 C66 655.6 59 652 56 646 Z" fill="#5f4c4c"/><path d="M500 655.6 H476 C490 655.6 496 652 500 646 Z" fill="#5f4c4c" opacity="0"/></g>
<path d="M75.2 648.8 V661.6 L78.6 658.2 H84.6 Z" fill="#dcd4d0"/>
<text x="109.4" y="661.9" font-family="Liberation Sans, sans-serif" font-size="18" fill="#dcd4d0" stroke="#dcd4d0" stroke-width="0.7" text-anchor="middle" opacity="0.99">C</text>
<text x="142.4" y="661.9" font-family="Liberation Sans, sans-serif" font-size="18" fill="#dcd4d0" stroke="#dcd4d0" stroke-width="0.7" text-anchor="middle" opacity="0.99">O</text>
<text x="174.4" y="661.9" font-family="Liberation Sans, sans-serif" font-size="18" fill="#dcd4d0" stroke="#dcd4d0" stroke-width="0.7" text-anchor="middle" opacity="0.99">N</text>
<text x="206.7" y="661.9" font-family="Liberation Sans, sans-serif" font-size="18" fill="#dcd4d0" stroke="#dcd4d0" stroke-width="0.7" text-anchor="middle" opacity="0.99">H</text>
<text x="234.5" y="661.9" font-family="Liberation Sans, sans-serif" font-size="18" fill="#dcd4d0" stroke="#dcd4d0" stroke-width="0.7" text-anchor="middle" opacity="0.99">X</text>
<path d="M242.5 657 H249.7 L246.1 662.9 Z" fill="#dcd4d0"/>
<path fill-rule="evenodd" d="M269.80 663.50 L262.61 659.35 L262.61 651.05 L269.80 646.90 L276.99 651.05 L276.99 659.35 Z M265.40 655.20 a4.40 4.40 0 1 0 8.80 0 a4.40 4.40 0 1 0 -8.80 0 Z" fill="#dcd4d0"/>
<path d="M301.70 655.40 L309.90 655.40 M306.30 655.40 L308.49 658.00 M306.30 655.40 L308.49 652.80 M301.70 655.40 L305.80 662.50 M304.00 659.38 L302.84 662.58 M304.00 659.38 L307.35 659.97 M301.70 655.40 L297.60 662.50 M299.40 659.38 L296.05 659.97 M299.40 659.38 L300.56 662.58 M301.70 655.40 L293.50 655.40 M297.10 655.40 L294.91 652.80 M297.10 655.40 L294.91 658.00 M301.70 655.40 L297.60 648.30 M299.40 651.42 L300.56 648.22 M299.40 651.42 L296.05 650.83 M301.70 655.40 L305.80 648.30 M304.00 651.42 L307.35 650.83 M304.00 651.42 L302.84 648.22" stroke="#dcd4d0" stroke-width="1.35" fill="none" stroke-linecap="butt"/>
<polygon points="304.21,656.85 301.70,658.30 299.19,656.85 299.19,653.95 301.70,652.50 304.21,653.95" fill="none" stroke="#dcd4d0" stroke-width="1.1"/>
<path d="M326.8 651.7 L340.4 648.6 V657.9 L326.8 661 Z" fill="none" stroke="#dcd4d0" stroke-width="1.7" stroke-linejoin="miter"/>
<polygon points="413.80,647.00 415.86,652.77 421.98,652.94 417.13,656.68 418.85,662.56 413.80,659.10 408.75,662.56 410.47,656.68 405.62,652.94 411.74,652.77" fill="#dcd4d0"/>
<g stroke="#dcd4d0" stroke-width="1" fill="none"><rect x="437.9" y="646.2" width="16.6" height="16.6"/><rect x="442" y="650.2" width="8.4" height="8.4"/><path d="M437.9 646.2 L442 650.2 M454.5 646.2 L450.4 650.2 M437.9 662.8 L442 658.6 M454.5 662.8 L450.4 658.6"/></g>
<g filter="url(#glow)" fill="#fff" opacity=".38"><rect x="465" y="643.5" width="24" height="23" rx="10"/></g>
<g filter="url(#glow)" fill="#fff" opacity=".4"><circle cx="472.4" cy="650.7" r="4.5"/><circle cx="481.4" cy="650.7" r="4.5"/><circle cx="472.4" cy="659.7" r="4.5"/><circle cx="481.4" cy="659.7" r="4.5"/></g>
<circle cx="472.4" cy="650.7" r="3.3" fill="#fff"/><circle cx="472.4" cy="659.7" r="3.3" fill="#fff"/><circle cx="481.4" cy="659.7" r="3.3" fill="#fff"/>
<circle cx="481.4" cy="650.7" r="2.6" fill="#6a5a5a" stroke="#fff" stroke-width="1.2"/>
</svg>
<div id="panel"></div>
<svg class="abs" style="left:900px;top:8px" width="130" height="32" viewBox="900 8 130 32">
<defs>
<linearGradient id="cb" x1="0" y1="0" x2="0" y2="1"><stop offset="0" stop-color="#e6edf5"/><stop offset="0.47" stop-color="#cfdbe8"/><stop offset="0.5" stop-color="#a6bbd2"/><stop offset="1" stop-color="#bccde0"/></linearGradient>
<linearGradient id="cr" x1="0" y1="0" x2="0" y2="1"><stop offset="0" stop-color="#ecb3a8"/><stop offset="0.47" stop-color="#d98b7b"/><stop offset="0.5" stop-color="#c4452b"/><stop offset="0.8" stop-color="#d06a4e"/><stop offset="1" stop-color="#dd9a82"/></linearGradient>
<clipPath id="cbc"><path d="M914 13 H1017.4 V27.5 Q1017.4 32 1013 32 H918.5 Q914 32 914 27.5 Z"/></clipPath>
</defs>
<g clip-path="url(#cbc)">
<rect x="914" y="12" width="29" height="20" fill="url(#cb)"/>
<rect x="942" y="12" width="28" height="20" fill="url(#cb)"/>
<rect x="969.5" y="12" width="48" height="20" fill="url(#cr)"/>
</g>
<path d="M914.5 13 V27.5 Q914.5 31.5 918.5 31.5 H1013 Q1016.9 31.5 1016.9 27.5 V13" fill="none" stroke="#4a5868" stroke-width="1"/>
<path d="M942.5 13 V31 M969.5 13 V31" stroke="#4a5868" stroke-width="1"/>
<path d="M915.5 13 V27.5 Q915.5 30.5 918.5 30.5 H941.5 V13 M943.5 13 V30.5 H968.5 V13" fill="none" stroke="#ffffff" stroke-opacity=".65" stroke-width="1"/>
<path d="M970.5 13 V30.5 H1013 Q1015.9 30.5 1015.9 27.5 V13" fill="none" stroke="#f3c8bd" stroke-opacity=".7" stroke-width="1"/>
<path d="M969.5 13 V31.5 H1013 Q1016.9 31.5 1016.9 27.5 V13" fill="none" stroke="#5a2a22" stroke-width="1" stroke-opacity=".75"/>
<rect x="923.5" y="22.5" width="11" height="4" rx="1" fill="#fff" stroke="#4d5b6b" stroke-width="1"/>
<rect x="950.5" y="17.5" width="11" height="9" rx="1" fill="#fff" stroke="#4d5b6b" stroke-width="1"/>
<rect x="953.5" y="20.5" width="5" height="3" fill="#b4c6da" stroke="#4d5b6b" stroke-width="1"/>
<path d="M989.4 17.9 L997.8 26.3 M997.8 17.9 L989.4 26.3" stroke="#4a3a3a" stroke-width="4.2" stroke-linecap="butt" fill="none"/>
<path d="M990.2 18.7 L997 25.5 M997 18.7 L990.2 25.5" stroke="#fff" stroke-width="2.5" stroke-linecap="butt" fill="none"/>
</svg>
<svg class="abs" style="left:19px;top:16px" width="22" height="22" viewBox="19 16 22 22">
<circle cx="26.8" cy="24.6" r="5.4" fill="#e6f1fb" stroke="#cfcfcf" stroke-width="1.2"/>
<path d="M23 23 Q24 22 25.5 22.6 L26.5 21.2 Q29 20.6 29.8 22.5 L30 27.6 Q29 28.4 27.3 27.8 L26.8 25.6 Q25.6 25 25 25.6 Q23.4 25.6 23 24.4 Z" fill="#ff8a12"/>
<circle cx="25.3" cy="23.6" r="0.8" fill="#f4500a"/><circle cx="28" cy="25.2" r="0.9" fill="#f4500a"/>
<path d="M31.6 29.4 L36.2 33.8" stroke="#5e5e5e" stroke-width="2.4" stroke-linecap="butt"/>
</svg>
<span class="t" style="left:42.20px;top:19px;line-height:16px;font-size:12.3px;letter-spacing:-0.289px;color:#000;text-shadow:0 0 6px #fff,0 0 4px #fff,0 0 8px rgba(255,255,255,.8);">ADFinput 2017.101</span>
<span class="t" style="left:27.50px;top:44px;line-height:16px;font-size:11.9px;letter-spacing:-0.709px;color:#000;"><u>S</u>CM</span>
<span class="t" style="left:66.90px;top:44px;line-height:16px;font-size:11.9px;letter-spacing:-0.353px;color:#000;"><u>F</u>ile</span>
<span class="t" style="left:98.90px;top:44px;line-height:16px;font-size:11.9px;letter-spacing:-0.262px;color:#000;"><u>E</u>dit</span>
<span class="t" style="left:133.10px;top:44px;line-height:16px;font-size:11.9px;letter-spacing:-0.436px;color:#000;"><u>S</u>elect</span>
<span class="t" style="left:177.50px;top:44px;line-height:16px;font-size:11.9px;letter-spacing:0.381px;color:#000;"><u>A</u>toms</span>
<span class="t" style="left:227.00px;top:44px;line-height:16px;font-size:11.9px;letter-spacing:-0.249px;color:#000;"><u>B</u>onds</span>
<span class="t" style="left:273.70px;top:44px;line-height:16px;font-size:11.9px;letter-spacing:-0.235px;color:#000;"><u>V</u>iew</span>
<span class="t" style="left:312.70px;top:44px;line-height:16px;font-size:11.9px;letter-spacing:0.129px;color:#000;"><u>H</u>elp</span>
<div class="abs" style="left:536px;top:62px;width:480px;height:28px;background:#bfbfbf;"></div>
<div class="abs" style="left:536px;top:90px;width:480px;height:1px;background:#7f7f7f;"></div>
<div class="abs" style="left:583px;top:62px;width:57px;height:29px;background:#e6e6e6;"></div>
<div class="abs" style="left:640px;top:62px;width:1px;height:29px;background:#7a7a7a;"></div>
<svg class="abs" style="left:536px;top:62px" width="60" height="30" viewBox="0 0 60 30"><path d="M0 0 H47 L54.5 14.5 L47 29 H0 Z" fill="#f5ae43"/><path d="M47 0 L54.5 14.5 L47 29 H0" fill="none" stroke="#a79a86" stroke-width="1"/></svg>
<span class="t" style="left:541.00px;top:69px;line-height:14px;font-size:11.3px;letter-spacing:-0.709px;color:#000;font-weight:bold;-webkit-text-stroke:0.15px #000;transform:scaleX(1.130);transform-origin:0 0;">BAND</span>
<span class="t" style="left:596.60px;top:69px;line-height:14px;font-size:11.3px;letter-spacing:-0.092px;color:#000;font-weight:bold;-webkit-text-stroke:0.15px #000;transform:scaleX(1.130);transform-origin:0 0;">Main</span>
<span class="t" style="left:646.30px;top:69px;line-height:14px;font-size:11.3px;letter-spacing:-0.001px;color:#000;font-weight:bold;-webkit-text-stroke:0.15px #000;transform:scaleX(1.130);transform-origin:0 0;">Model</span>
<span class="t" style="left:694.00px;top:69px;line-height:14px;font-size:11.3px;letter-spacing:0.412px;color:#000;font-weight:bold;-webkit-text-stroke:0.15px #000;transform:scaleX(1.130);transform-origin:0 0;">Properties</span>
<span class="t" style="left:772.20px;top:69px;line-height:14px;font-size:11.3px;letter-spacing:0.386px;color:#000;font-weight:bold;-webkit-text-stroke:0.15px #000;transform:scaleX(1.130);transform-origin:0 0;">Details</span>
<span class="t" style="left:827.10px;top:69px;line-height:14px;font-size:11.3px;letter-spacing:0.271px;color:#000;font-weight:bold;-webkit-text-stroke:0.15px #000;transform:scaleX(1.130);transform-origin:0 0;">MultiLevel</span>
<svg class="abs" style="left:985px;top:64px" width="26" height="24" viewBox="985 64 26 24"><circle cx="996.9" cy="74.8" r="5" fill="none" stroke="#1c1c1c" stroke-width="1.6"/><path d="M1000.6 78.3 L1005 81.8" stroke="#1c1c1c" stroke-width="2.6" stroke-linecap="round"/></svg>
<span class="t" style="left:547.20px;top:143px;line-height:14px;font-size:11.6px;letter-spacing:0.611px;color:#000;transform:scaleX(1.045);transform-origin:0 0;">Task:</span>
<span class="t" style="left:547.20px;top:197px;line-height:14px;font-size:11.6px;letter-spacing:0.324px;color:#000;transform:scaleX(1.045);transform-origin:0 0;">Periodicity:</span>
<span class="t" style="left:547.20px;top:247px;line-height:14px;font-size:11.6px;letter-spacing:0.332px;color:#000;transform:scaleX(1.045);transform-origin:0 0;">Unrestricted:</span>
<span class="t" style="left:547.20px;top:297px;line-height:14px;font-size:11.6px;letter-spacing:0.315px;color:#000;transform:scaleX(1.045);transform-origin:0 0;">XC functional:</span>
<span class="t" style="left:547.40px;top:328px;line-height:14px;font-size:11.6px;letter-spacing:0.393px;color:#000;transform:scaleX(1.045);transform-origin:0 0;">Relativity:</span>
<span class="t" style="left:547.60px;top:382px;line-height:14px;font-size:11.6px;letter-spacing:0.225px;color:#000;transform:scaleX(1.045);transform-origin:0 0;">Basis set:</span>
<span class="t" style="left:547.60px;top:413px;line-height:14px;font-size:11.6px;letter-spacing:0.191px;color:#000;transform:scaleX(1.045);transform-origin:0 0;">Frozen core:</span>
<span class="t" style="left:547.60px;top:444px;line-height:14px;font-size:11.6px;letter-spacing:0.328px;color:#000;transform:scaleX(1.045);transform-origin:0 0;">Numerical quality:</span>
<span class="t" style="left:547.50px;top:494px;line-height:14px;font-size:11.6px;letter-spacing:0.283px;color:#000;transform:scaleX(1.045);transform-origin:0 0;">Calculate:</span>
<div class="abs" style="left:676px;top:136px;width:166px;height:27px;box-sizing:border-box;background:#dffddf;border-top:1px solid #7a9a7a;border-left:1px solid #86a886;border-right:1px solid #c6f0c6;border-bottom:1px solid #c6f0c6;"></div>
<div class="abs" style="left:825px;top:138px;width:15px;height:23px;background:#f2f2f2;"></div>
<div class="abs" style="left:824px;top:138px;width:1px;height:23px;background:#8c8c8c;"></div>
<svg class="abs" style="left:828px;top:147px" width="10" height="7" viewBox="0 0 10 7"><path d="M0.9 0.8 H8.5 L4.7 5.9 Z" fill="#303030"/></svg>
<span class="t" style="left:688.40px;top:143px;line-height:14px;font-size:11.6px;letter-spacing:0.190px;color:#000;transform:scaleX(1.040);transform-origin:0 0;">Single Point</span>
<div class="abs" style="left:676px;top:190px;width:166px;height:27px;box-sizing:border-box;background:#ededed;border-top:1px solid #828282;border-left:1px solid #8a8a8a;border-right:1px solid #ffffff;border-bottom:1px solid #ffffff;"></div>
<div class="abs" style="left:825px;top:192px;width:15px;height:23px;background:#f2f2f2;"></div>
<div class="abs" style="left:824px;top:192px;width:1px;height:23px;background:#8c8c8c;"></div>
<svg class="abs" style="left:828px;top:201px" width="10" height="7" viewBox="0 0 10 7"><path d="M0.9 0.8 H8.5 L4.7 5.9 Z" fill="#303030"/></svg>
<span class="t" style="left:688.40px;top:197px;line-height:14px;font-size:11.6px;letter-spacing:0.242px;color:#000;transform:scaleX(1.040);transform-origin:0 0;">Bulk</span>
<div class="abs" style="left:676px;top:290px;width:166px;height:27px;box-sizing:border-box;background:#ededed;border-top:1px solid #828282;border-left:1px solid #8a8a8a;border-right:1px solid #ffffff;border-bottom:1px solid #ffffff;"></div>
<div class="abs" style="left:825px;top:292px;width:15px;height:23px;background:#f2f2f2;"></div>
<div class="abs" style="left:824px;top:292px;width:1px;height:23px;background:#8c8c8c;"></div>
<svg class="abs" style="left:828px;top:301px" width="10" height="7" viewBox="0 0 10 7"><path d="M0.9 0.8 H8.5 L4.7 5.9 Z" fill="#303030"/></svg>
<span class="t" style="left:688.40px;top:297px;line-height:14px;font-size:11.1px;letter-spacing:0.043px;color:#000;transform:scaleX(1.040);transform-origin:0 0;">LDA</span>
<div class="abs" style="left:676px;top:321px;width:166px;height:27px;box-sizing:border-box;background:#ededed;border-top:1px solid #828282;border-left:1px solid #8a8a8a;border-right:1px solid #ffffff;border-bottom:1px solid #ffffff;"></div>
<div class="abs" style="left:825px;top:323px;width:15px;height:23px;background:#f2f2f2;"></div>
<div class="abs" style="left:824px;top:323px;width:1px;height:23px;background:#8c8c8c;"></div>
<svg class="abs" style="left:828px;top:332px" width="10" height="7" viewBox="0 0 10 7"><path d="M0.9 0.8 H8.5 L4.7 5.9 Z" fill="#303030"/></svg>
<span class="t" style="left:688.40px;top:328px;line-height:14px;font-size:11.6px;letter-spacing:-0.075px;color:#000;transform:scaleX(1.040);transform-origin:0 0;">None</span>
<div class="abs" style="left:676px;top:375px;width:166px;height:27px;box-sizing:border-box;background:#ededed;border-top:1px solid #828282;border-left:1px solid #8a8a8a;border-right:1px solid #ffffff;border-bottom:1px solid #ffffff;"></div>
<div class="abs" style="left:825px;top:377px;width:15px;height:23px;background:#f2f2f2;"></div>
<div class="abs" style="left:824px;top:377px;width:1px;height:23px;background:#8c8c8c;"></div>
<svg class="abs" style="left:828px;top:386px" width="10" height="7" viewBox="0 0 10 7"><path d="M0.9 0.8 H8.5 L4.7 5.9 Z" fill="#303030"/></svg>
<span class="t" style="left:688.40px;top:382px;line-height:14px;font-size:11.1px;letter-spacing:0.910px;color:#000;transform:scaleX(1.040);transform-origin:0 0;">DZ</span>
<div class="abs" style="left:676px;top:406px;width:166px;height:27px;box-sizing:border-box;background:#ededed;border-top:1px solid #828282;border-left:1px solid #8a8a8a;border-right:1px solid #ffffff;border-bottom:1px solid #ffffff;"></div>
<div class="abs" style="left:825px;top:408px;width:15px;height:23px;background:#f2f2f2;"></div>
<div class="abs" style="left:824px;top:408px;width:1px;height:23px;background:#8c8c8c;"></div>
<svg class="abs" style="left:828px;top:417px" width="10" height="7" viewBox="0 0 10 7"><path d="M0.9 0.8 H8.5 L4.7 5.9 Z" fill="#303030"/></svg>
<span class="t" style="left:688.40px;top:413px;line-height:14px;font-size:11.6px;letter-spacing:0.076px;color:#000;transform:scaleX(1.040);transform-origin:0 0;">Large</span>
<div class="abs" style="left:676px;top:437px;width:166px;height:27px;box-sizing:border-box;background:#ededed;border-top:1px solid #828282;border-left:1px solid #8a8a8a;border-right:1px solid #ffffff;border-bottom:1px solid #ffffff;"></div>
<div class="abs" style="left:825px;top:439px;width:15px;height:23px;background:#f2f2f2;"></div>
<div class="abs" style="left:824px;top:439px;width:1px;height:23px;background:#8c8c8c;"></div>
<svg class="abs" style="left:828px;top:448px" width="10" height="7" viewBox="0 0 10 7"><path d="M0.9 0.8 H8.5 L4.7 5.9 Z" fill="#303030"/></svg>
<span class="t" style="left:688.40px;top:444px;line-height:14px;font-size:11.6px;letter-spacing:0.280px;color:#000;transform:scaleX(1.040);transform-origin:0 0;">Normal</span>
<div class="abs" style="left:677px;top:248px;width:10px;height:10px;box-sizing:border-box;background:#fff;border-top:1px solid #828282;border-left:1px solid #828282;"></div>
<div class="abs" style="left:677px;top:495px;width:10px;height:10px;box-sizing:border-box;background:#fff;border-top:1px solid #828282;border-left:1px solid #828282;"></div>
<div class="abs" style="left:677px;top:519px;width:10px;height:10px;box-sizing:border-box;background:#fff;border-top:1px solid #828282;border-left:1px solid #828282;"></div>
<span class="t" style="left:692.20px;top:247px;line-height:14px;font-size:11.6px;letter-spacing:-0.086px;color:#000;transform:scaleX(0.950);transform-origin:0 0;">Yes</span>
<span class="t" style="left:692.70px;top:494px;line-height:14px;font-size:11.1px;letter-spacing:-0.000px;color:#000;transform:scaleX(0.930);transform-origin:0 0;">DOS</span>
<span class="t" style="left:692.70px;top:518px;line-height:14px;font-size:11.6px;letter-spacing:0.069px;color:#000;">Bandstructure</span>
<svg class="abs" style="left:989px;top:139.5px" width="19" height="19" viewBox="0 0 19 19"><circle cx="9.5" cy="9.5" r="8.4" fill="#545454"/><circle cx="5.6" cy="9.7" r="1.05" fill="#fff"/><circle cx="9.6" cy="9.7" r="1.05" fill="#fff"/><circle cx="13.6" cy="9.7" r="1.05" fill="#fff"/></svg>
<svg class="abs" style="left:989px;top:193.5px" width="19" height="19" viewBox="0 0 19 19"><circle cx="9.5" cy="9.5" r="8.4" fill="#545454"/><circle cx="5.6" cy="9.7" r="1.05" fill="#fff"/><circle cx="9.6" cy="9.7" r="1.05" fill="#fff"/><circle cx="13.6" cy="9.7" r="1.05" fill="#fff"/></svg>
<svg class="abs" style="left:989px;top:293.5px" width="19" height="19" viewBox="0 0 19 19"><circle cx="9.5" cy="9.5" r="8.4" fill="#545454"/><circle cx="5.6" cy="9.7" r="1.05" fill="#fff"/><circle cx="9.6" cy="9.7" r="1.05" fill="#fff"/><circle cx="13.6" cy="9.7" r="1.05" fill="#fff"/></svg>
<svg class="abs" style="left:989px;top:324.5px" width="19" height="19" viewBox="0 0 19 19"><circle cx="9.5" cy="9.5" r="8.4" fill="#545454"/><circle cx="5.6" cy="9.7" r="1.05" fill="#fff"/><circle cx="9.6" cy="9.7" r="1.05" fill="#fff"/><circle cx="13.6" cy="9.7" r="1.05" fill="#fff"/></svg>
<svg class="abs" style="left:989px;top:378.5px" width="19" height="19" viewBox="0 0 19 19"><circle cx="9.5" cy="9.5" r="8.4" fill="#545454"/><circle cx="5.6" cy="9.7" r="1.05" fill="#fff"/><circle cx="9.6" cy="9.7" r="1.05" fill="#fff"/><circle cx="13.6" cy="9.7" r="1.05" fill="#fff"/></svg>
<svg class="abs" style="left:989px;top:441px" width="19" height="19" viewBox="0 0 19 19"><circle cx="9.5" cy="9.5" r="8.4" fill="#545454"/><circle cx="5.6" cy="9.7" r="1.05" fill="#fff"/><circle cx="9.6" cy="9.7" r="1.05" fill="#fff"/><circle cx="13.6" cy="9.7" r="1.05" fill="#fff"/></svg>
<svg class="abs" style="left:989px;top:491.5px" width="19" height="19" viewBox="0 0 19 19"><circle cx="9.5" cy="9.5" r="8.4" fill="#545454"/><circle cx="5.6" cy="9.7" r="1.05" fill="#fff"/><circle cx="9.6" cy="9.7" r="1.05" fill="#fff"/><circle cx="13.6" cy="9.7" r="1.05" fill="#fff"/></svg>
<svg class="abs" style="left:989px;top:515.5px" width="19" height="19" viewBox="0 0 19 19"><circle cx="9.5" cy="9.5" r="8.4" fill="#545454"/><circle cx="5.6" cy="9.7" r="1.05" fill="#fff"/><circle cx="9.6" cy="9.7" r="1.05" fill="#fff"/><circle cx="13.6" cy="9.7" r="1.05" fill="#fff"/></svg>
</body></html>
